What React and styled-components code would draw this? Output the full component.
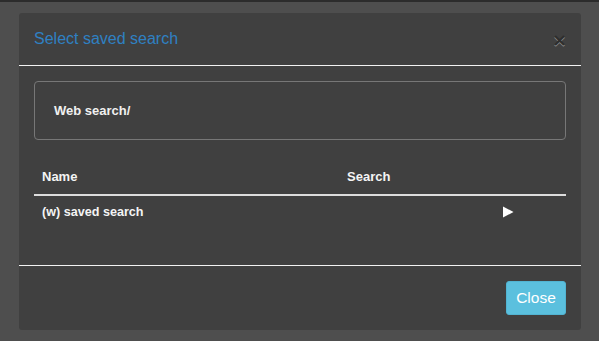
import React from "react";
import styled, { createGlobalStyle } from "styled-components";

const Global = createGlobalStyle`
  html, body { margin: 0; padding: 0; background: #4e4e4e; }
  body { font-family: "Liberation Sans", Arial, sans-serif; }
`;

const Backdrop = styled.div`
  box-sizing: border-box;
  height: 341px;
  background: #4e4e4e;
  border-top: 2px solid #2c2c2c;
  padding: 11px 18px 0 19px;
`;

const Modal = styled.div`
  width: 562px;
  height: 317px;
  background: #404040;
  border-radius: 3px;
  display: flex;
  flex-direction: column;
`;

const Header = styled.div`
  box-sizing: border-box;
  height: 53px;
  border-bottom: 1px solid #f2f2f2;
  padding: 0 15px;
  display: flex;
  align-items: center;
  justify-content: space-between;
`;

const Title = styled.h4`
  margin: 0;
  font-size: 16px;
  font-weight: normal;
  color: #2f80c3;
  padding-bottom: 1px;
`;

const CloseX = styled.button`
  background: none;
  border: 0;
  padding: 0;
  font-family: "DejaVu Sans", sans-serif;
  font-size: 18px;
  font-weight: bold;
  line-height: 1;
  color: #2e2e2e;
  text-shadow: 0 1px 0 #8e8e8e;
  cursor: pointer;
  margin-right: -1px;
  margin-top: 1px;
`;

const Body = styled.div`
  box-sizing: border-box;
  height: 199px;
  padding: 15px 15px 0;
`;

const PathBox = styled.div`
  box-sizing: border-box;
  height: 59px;
  border: 1px solid #777;
  border-radius: 4px;
  padding: 0 19px;
  display: flex;
  align-items: center;
  color: #f0f0f0;
  font-size: 13px;
  font-weight: bold;
`;

const Table = styled.div`
  margin-top: 18px;
`;

const Row = styled.div`
  display: grid;
  grid-template-columns: 305px 155px 1fr;
  align-items: center;
  height: ${(p) => p.$h}px;
  border-bottom: ${(p) => (p.$head ? "2px solid #dcdcdc" : "none")};
  color: #f4f4f4;
  font-size: ${(p) => (p.$head ? 13 : 12.6)}px;
  font-weight: bold;
`;

const Cell = styled.div`
  padding: 0 8px;
  display: flex;
  align-items: center;
`;

const Footer = styled.div`
  box-sizing: border-box;
  flex: 1;
  border-top: 1px solid #f2f2f2;
  padding: 15px 15px 0;
  display: flex;
  justify-content: flex-end;
  align-items: flex-start;
`;

const Button = styled.button`
  width: 60px;
  height: 34px;
  background: #5bc0de;
  border: 1px solid #52b4d2;
  border-radius: 3px;
  color: #fff;
  font-family: "Liberation Sans", Arial, sans-serif;
  font-size: 15.5px;
  padding: 0;
  cursor: pointer;
`;

const Play = () => (
  <svg width="12" height="12" viewBox="0 0 12 12">
    <polygon points="1,0.5 11.5,6 1,11.5" fill="#ffffff" />
  </svg>
);

export default function App() {
  return (
    <>
      <Global />
      <Backdrop>
        <Modal>
          <Header>
            <Title>Select saved search</Title>
            <CloseX>×</CloseX>
          </Header>
          <Body>
            <PathBox>Web search/</PathBox>
            <Table>
              <Row $head $h={36}>
                <Cell>Name</Cell>
                <Cell>Search</Cell>
                <Cell />
              </Row>
              <Row $h={32}>
                <Cell>(w) saved search</Cell>
                <Cell />
                <Cell>
                  <Play />
                </Cell>
              </Row>
            </Table>
          </Body>
          <Footer>
            <Button>Close</Button>
          </Footer>
        </Modal>
      </Backdrop>
    </>
  );
}
